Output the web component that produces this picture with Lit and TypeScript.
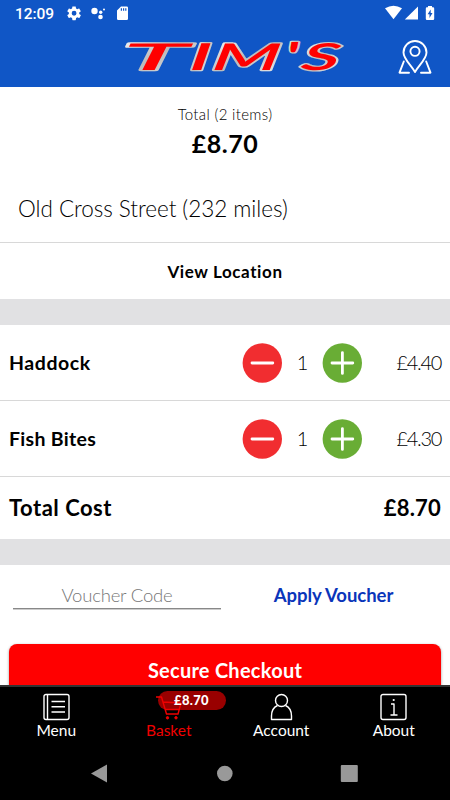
import { LitElement, html, svg, css } from "lit";
import { customElement } from "lit/decorators.js";

interface BasketItem {
  name: string;
  qty: number;
  price: string;
}

const ITEMS: BasketItem[] = [
  { name: "Haddock", qty: 1, price: "£4.40" },
  { name: "Fish Bites", qty: 1, price: "£4.30" },
];

const LOGO = [
  { ch: "T", x: 120, w: 66, weight: 500, skew: -6 },
  { ch: "I", x: 190, w: 18, weight: 900, skew: -8 },
  { ch: "M", x: 211, w: 68, weight: 600, skew: -8 },
  { ch: "'", x: 286, w: 12, weight: 900, skew: 0 },
  { ch: "S", x: 300, w: 38, weight: 600, skew: -10 },
];

@customElement("app-root")
export class AppRoot extends LitElement {
  static styles = css`
    :host {
      display: flex;
      flex-direction: column;
      width: 450px;
      height: 800px;
      overflow: hidden;
      background: #fff;
      color: #000;
      font-family: Lato, "Open Sans", sans-serif;
      white-space: nowrap;
    }
    * { box-sizing: border-box; }
    svg { display: block; }
    .header { flex: none; height: 87px; background: #1056c6; }
    .page { flex: none; height: 598px; overflow: hidden; display: flex; flex-direction: column; }
    .page > * { flex: none; }
    .total { height: 87px; padding-top: 17px; text-align: center; }
    .total-label { font-size: 15px; line-height: 21px; font-weight: 300; letter-spacing: 0.33px; }
    .total-value { font-size: 25px; line-height: 36px; font-weight: 700; letter-spacing: 0.5px; }
    .place { height: 69px; padding: 20px 18px 0; font-size: 22.5px; line-height: 30px; font-weight: 300; letter-spacing: -0.04px; border-bottom: 1px solid #d8d8d8; }
    .view { height: 56px; line-height: 57px; text-align: center; font-size: 17px; font-weight: 700; letter-spacing: 0.6px; }
    .band { height: 26px; background: #e1e1e3; }
    .item { height: 76px; display: flex; align-items: center; padding: 0 9px; border-bottom: 1px solid #d8d8d8; }
    .name { width: 233px; font-size: 19.5px; line-height: 25px; font-weight: 700; letter-spacing: 0.55px; }
    .item:nth-of-type(6) .name { letter-spacing: 0.3px; }
    .qty { width: 40px; text-align: center; font-size: 20px; font-weight: 300; padding: 0 0 1px 1px; }
    .price { flex: 1; text-align: right; font-size: 20px; font-weight: 300; letter-spacing: -1.3px; padding: 0 1px 1px 0; margin-right: -1px; }
    .cost { height: 62px; padding: 0 9px 2px; display: flex; align-items: center; justify-content: space-between; font-size: 22px; font-weight: 700; letter-spacing: 0.5px; }
    .cost .sum { letter-spacing: 0.2px; }
    .voucher { height: 79px; display: flex; padding: 13px 0 0 13px; }
    .field { width: 208px; height: 31px; border-bottom: 1px solid #888; text-align: center; font-size: 18.5px; line-height: 34px; font-weight: 300; color: #777; letter-spacing: -0.2px; box-shadow: 0 1px 0 #ccc; }
    .apply { width: 225px; text-align: center; font-size: 18.5px; line-height: 34px; font-weight: 700; color: #0a35ba; letter-spacing: -0.04px; }
    .checkout { height: 60px; margin: 0 9px; border-radius: 8px; background: #f00; color: #fff; text-align: center; font-size: 20px; line-height: 53px; font-weight: 700; letter-spacing: 0.25px; box-shadow: 0 1px 3px #0006; }
    .tabs { flex: none; height: 62px; display: grid; grid-template-columns: repeat(4, 112.5px); background: #000; border-top: 2px solid #333; color: #fff; }
    .tab { position: relative; display: flex; flex-direction: column; align-items: center; padding-top: 6px; font-size: 15.5px; line-height: 18px; }
    .tab svg { position: relative; }
    .tab.active { color: #f00000; }
    .badge { position: absolute; left: 45px; top: 4px; width: 68px; height: 19px; border-radius: 10px; background: #990000; }
    .amount { position: absolute; left: 45px; top: 4px; width: 68px; color: #fff; font-size: 13px; line-height: 19px; font-weight: 900; letter-spacing: 0.3px; text-align: center; }
    .system { flex: none; height: 53px; background: #000; }
  `;

  private header() {
    return html`<svg class="header" width="450" height="87" viewBox="0 0 450 87">
      <defs>
        <linearGradient id="rim" x1="0" y1="0" x2="1" y2="1">
          <stop offset="0" stop-color="#fff" /><stop offset=".5" stop-color="#bbb" /><stop offset="1" stop-color="#eee" />
        </linearGradient>
      </defs>
      <text x="15" y="19" font-family="Roboto" font-size="15.5" font-weight="500" fill="#fff" textLength="39">12:09</text>
      <g fill="#fff">
        <path transform="translate(65.8 5) scale(.69)" d="M19.4 13a7.5 7.5 0 0 0 0-2l2.1-1.6c.2-.2.2-.4.1-.6l-2-3.5c-.1-.2-.4-.3-.6-.2l-2.5 1a7 7 0 0 0-1.7-1l-.4-2.6c0-.3-.2-.5-.5-.5h-4c-.2 0-.4.2-.4.5l-.4 2.6a7 7 0 0 0-1.7 1l-2.5-1c-.2-.1-.5 0-.6.2l-2 3.5c-.1.2-.1.5.1.6L4.5 11a7.5 7.5 0 0 0 0 2l-2.1 1.6c-.2.2-.2.4-.1.6l2 3.5c.1.2.4.3.6.2l2.5-1a7 7 0 0 0 1.7 1l.4 2.6c0 .3.2.5.5.5h4c.2 0 .4-.2.5-.5l.4-2.6a7 7 0 0 0 1.7-1l2.5 1c.2.1.5 0 .6-.2l2-3.5c.1-.2.1-.5-.1-.6zM12 15.5a3.5 3.5 0 1 1 0-7 3.500 3.500 0 0 1 0 7z" />
        <circle cx="94.5" cy="11" r="3.2" /><circle cx="100.700" cy="12.300" r="1.700" /><circle cx="104" cy="9.500" r="1" /><circle cx="100.500" cy="17" r="2.300" />
        <path fill-rule="evenodd" d="M121 6.500h5.700q1.300 0 1.300 1.300v10.900q0 1.300-1.300 1.300h-8.400q-1.300 0-1.300-1.300V10.500zM120.800 8.200v2.600h1.200V8.200zM123 8.200v2.600h1.200V8.200zM125.200 8.200v2.600h1.200V8.200z" />
        <path d="M385 8.300Q393.500 3.200 402 8.300L393.500 19.300z" /><path d="M418 6.500V19.500H404.800z" />
        <path fill-rule="evenodd" d="M428 7.200V6h4v1.200h1q1.200 0 1.200 1.200v10.300q0 1.200-1.200 1.200h-6q-1.200 0-1.200-1.200V8.400q0-1.200 1.200-1.200zM430.700 9.500L427.600 14.200h1.900v3.800l3-5h-1.800z" />
      </g>
      <g font-family="Lato" font-size="37" font-style="italic" fill="#f00" stroke="url(#rim)" stroke-width="2.400" paint-order="stroke" stroke-linejoin="round">
        ${LOGO.map((l) => svg`<text transform="translate(${l.x} 70) skewX(${l.skew})" font-weight=${l.weight} textLength=${l.w} lengthAdjust="spacingAndGlyphs">${l.ch}</text>`)}
      </g>
      <g fill="none" stroke="#fff" stroke-width="1.900" stroke-linejoin="round" stroke-linecap="round">
        <path d="M415 72C411 65 403.500 59 403.500 52.500a11.500 11.500 0 0 1 23 0C426.500 59 419 65 415 72z" />
        <circle cx="415" cy="51.300" r="4.600" />
        <path d="M403.800 61.500L399.500 72.700H409M426.200 61.500L430.500 72.700H421" />
      </g>
    </svg>`;
  }

  private circle(plus: boolean) {
    return html`<svg width="40" height="40" viewBox="0 0 40 40">
      <circle cx="20.300" cy="20" r="19.700" fill=${plus ? "#69ad35" : "#f12d30"} />
      <path d=${plus ? "M10 20H30.800M20.400 9.600V30.400" : "M10 20H30.800"} stroke="#fff" stroke-width="2.800" stroke-linecap="round" />
    </svg>`;
  }

  private icon(kind: string) {
    const shapes: Record<string, unknown> = {
      Menu: svg`<rect x="2" y="1.500" width="25" height="25" rx="2" /><path d="M5.500 2V26M9.500 8.500H23M9.500 13.800H23M9.500 19H23" />`,
      Basket: svg`<path d="M2 4H7.500L12.500 21H24L27 10M8.800 9L27 10M11 16.500H25.300" /><circle cx="13.500" cy="24.800" r="1.200" fill="currentColor" stroke-width="1" /><circle cx="22" cy="24.800" r="1.200" fill="currentColor" stroke-width="1" />`,
      Account: svg`<circle cx="14.500" cy="7.500" r="6" /><path d="M10.500 12.500C6 14.500 4.500 18 4.500 23V26.500H24.500V23C24.500 18 23 14.500 18.500 12.500" />`,
      About: svg`<rect x="2" y="1.500" width="25" height="25" rx="2" /><path d="M12 11H15V22M11.500 22H18.500" /><circle cx="14.700" cy="7" r="1.100" fill="currentColor" stroke="none" />`,
    };
    return html`<svg width="29" height="28" viewBox="0 0 29 28" fill="none" stroke="currentColor" stroke-width="1.400" stroke-linejoin="round">${shapes[kind]}</svg>`;
  }

  render() {
    return html`
      ${this.header()}
      <main class="page">
        <div class="total">
          <div class="total-label">Total (2 items)</div>
          <div class="total-value">£8.70</div>
        </div>
        <div class="place">Old Cross Street (232 miles)</div>
        <div class="view">View Location</div>
        <div class="band"></div>
        ${ITEMS.map((i) => html`<div class="item">
          <span class="name">${i.name}</span>${this.circle(false)}
          <span class="qty">${i.qty}</span>${this.circle(true)}
          <span class="price">${i.price}</span>
        </div>`)}
        <div class="cost"><span>Total Cost</span><span class="sum">£8.70</span></div>
        <div class="band"></div>
        <div class="voucher"><div class="field">Voucher Code</div><div class="apply">Apply Voucher</div></div>
        <div class="checkout">Secure Checkout</div>
      </main>
      <nav class="tabs">
        ${["Menu", "Basket", "Account", "About"].map((t) => html`<div class="tab ${t === "Basket" ? "active" : ""}">
          ${t === "Basket" ? html`<span class="badge"></span>` : ""}${this.icon(t)}<span>${t}</span>
          ${t === "Basket" ? html`<span class="amount">£8.70</span>` : ""}
        </div>`)}
      </nav>
      <svg class="system" width="450" height="53" viewBox="0 0 450 53">
        <g fill="#999"><path d="M91 26.500L107 17.500V35.500z" /><circle cx="224.800" cy="26.500" r="7.800" /><rect x="340.800" y="18" width="17" height="17" rx="1" /></g>
      </svg>
    `;
  }
}
